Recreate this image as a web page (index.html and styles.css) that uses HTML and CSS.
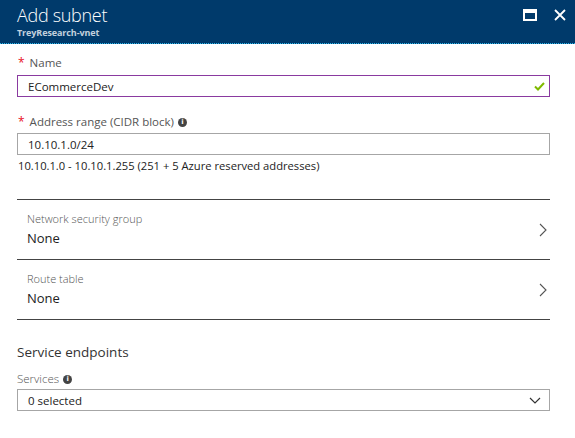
FILE: index.html
```html
<!DOCTYPE html>
<html>
<head>
<meta charset="utf-8">
<link rel="stylesheet" href="styles.css">
</head>
<body>
<div class="blade">
  <header class="blade-header">
    <div class="titles">
      <div class="title">Add subnet</div>
      <div class="subtitle">TreyResearch-vnet</div>
    </div>
    <div class="actions">
      <span class="maximize"></span>
      <svg class="close" width="12" height="12" viewBox="0 0 12 12"><path d="M1 1 L11 11 M11 1 L1 11" stroke="#fff" stroke-width="1.8" fill="none"/></svg>
    </div>
  </header>
  <main class="content">
    <div class="field first">
      <div class="label"><span class="req">*</span>Name</div>
      <div class="input valid">
        <span>ECommerceDev</span>
        <svg class="check" width="11" height="9" viewBox="0 0 11 9"><path d="M1 4.5 L4 7.5 L10 1" stroke="#7fba00" stroke-width="2" fill="none"/></svg>
      </div>
    </div>
    <div class="field second">
      <div class="label"><span class="req">*</span>Address range (CIDR block)<span class="info">i</span></div>
      <div class="input"><span>10.10.1.0/24</span></div>
      <div class="hint">10.10.1.0 - 10.10.1.255 (251 + 5 Azure reserved addresses)</div>
    </div>
    <div class="nav-list">
      <div class="nav-row">
        <div class="nav-text">
          <div class="nav-label">Network security group</div>
          <div class="nav-value">None</div>
        </div>
        <svg class="chev" width="8" height="14" viewBox="0 0 8 14"><path d="M1 1 L7 7 L1 13" stroke="#555" stroke-width="1.1" fill="none"/></svg>
      </div>
      <div class="nav-row">
        <div class="nav-text">
          <div class="nav-label">Route table</div>
          <div class="nav-value">None</div>
        </div>
        <svg class="chev" width="8" height="14" viewBox="0 0 8 14"><path d="M1 1 L7 7 L1 13" stroke="#555" stroke-width="1.1" fill="none"/></svg>
      </div>
    </div>
    <div class="section-title">Service endpoints</div>
    <div class="label plain">Services<span class="info">i</span></div>
    <div class="input select">
      <span>0 selected</span>
      <svg class="down" width="12" height="7" viewBox="0 0 12 7"><path d="M1 1 L6 6 L11 1" stroke="#333" stroke-width="1.2" fill="none"/></svg>
    </div>
  </main>
</div>
</body>
</html>
```
FILE: styles.css
```css
* { box-sizing: border-box; }
html, body { margin: 0; padding: 0; background: #fff; }
body {
  font-family: "Segoe UI", "Open Sans", "Noto Sans", sans-serif;
  color: #333;
  width: 575px;
  height: 438px;
  overflow: hidden;
}
.blade-header {
  height: 44px;
  background: #003a6b;
  border-bottom: 1px dotted #28b4ea;
  display: flex;
  justify-content: space-between;
  padding: 0 9px 0 17px;
}
.titles { padding-top: 3px; }
.title {
  color: #fff;
  font-weight: 300;
  font-size: 18px;
  line-height: 24px;
  letter-spacing: -0.3px;
}
.subtitle {
  color: #c3d1de;
  font-weight: 700;
  font-size: 9px;
  line-height: 12px;
  letter-spacing: -0.1px;
}
.actions {
  display: flex;
  align-items: flex-start;
  gap: 17px;
  padding-top: 9px;
}
.maximize {
  display: block;
  width: 14px;
  height: 12px;
  border: 2px solid #fff;
  border-top-width: 4px;
}
.close { display: block; }
.content { padding: 0 25px 0 17px; }
.field.first { margin-top: 11px; }
.field.second { margin-top: 17px; }
.label {
  font-size: 11.5px;
  line-height: 16px;
  color: #555;
  display: flex;
  align-items: center;
}
.req { color: #e81123; margin: 0 5px 0 1px; font-size: 12px; }
.info {
  display: inline-flex;
  justify-content: center;
  align-items: center;
  width: 9px;
  height: 9px;
  border-radius: 50%;
  background: #444;
  color: #fff;
  font-size: 7px;
  font-weight: 700;
  line-height: 9px;
  margin-left: 4px;
  font-family: "DejaVu Sans", sans-serif;
}
.input {
  margin-top: 4px;
  height: 22px;
  border: 1px solid #a6a6a6;
  display: flex;
  align-items: center;
  justify-content: space-between;
  padding: 0 4px 0 10px;
  font-size: 11.5px;
  color: #222;
}
.field.second .input { margin-top: 3px; }
.input.valid { border-color: #8a3aa0; }
.hint {
  font-size: 11.2px;
  line-height: 16px;
  color: #222;
  margin-top: 3px;
  margin-left: 1px;
}
.nav-list {
  margin-top: 25px;
  border-top: 1px solid #444;
}
.nav-row {
  height: 60px;
  border-bottom: 1px solid #444;
  display: flex;
  align-items: center;
  justify-content: space-between;
  padding: 0 3px 0 10px;
}
.nav-text { padding-top: 1px; }
.nav-label {
  font-size: 11px;
  line-height: 14px;
  color: #555;
  font-weight: 300;
}
.nav-value {
  font-size: 13px;
  line-height: 20px;
  color: #222;
  margin-top: 2px;
}
.section-title {
  margin-top: 22px;
  font-size: 13.5px;
  line-height: 20px;
  color: #333;
}
.label.plain { margin-top: 9px; font-weight: 300; }
.input.select { margin-top: 2px; padding-right: 8px; }
.down { display: block; }
```
